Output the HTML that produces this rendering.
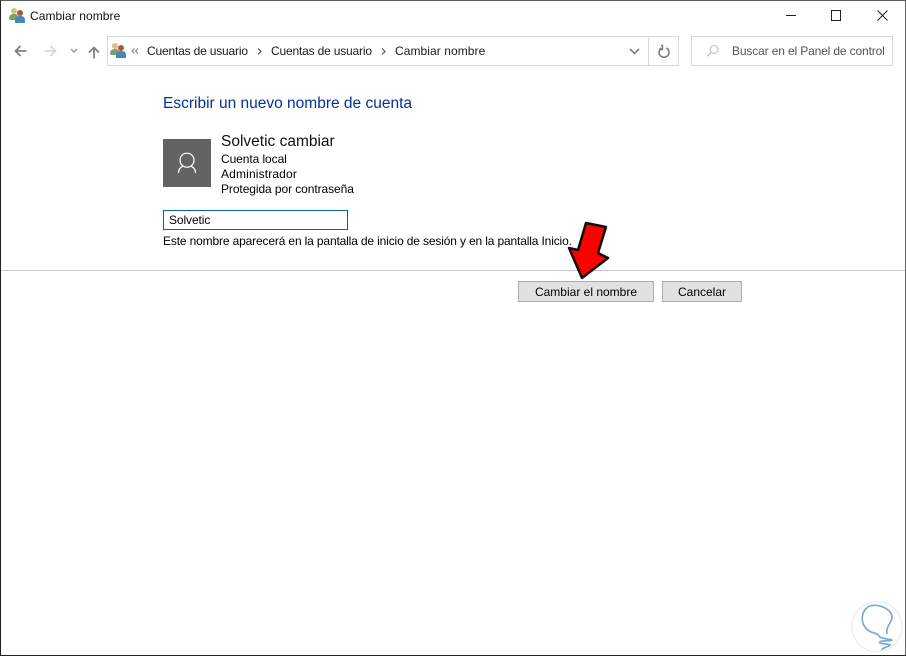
<!DOCTYPE html>
<html><head><meta charset="utf-8">
<style>
html,body{margin:0;padding:0;background:#fff}
body{width:906px;height:656px;position:relative;overflow:hidden;font-family:"Liberation Sans",sans-serif;font-size:12px;color:#000}
.t{position:absolute;white-space:nowrap;line-height:15px}
.box{position:absolute;box-sizing:border-box}
svg{position:absolute;overflow:visible}
</style></head><body>
<!-- window frame -->
<div class="box" style="left:0;top:0;width:906px;height:656px;border:1px solid #555;border-top-color:#5c5c5c;border-left-color:#222;border-bottom-color:#222;border-right-color:#666"></div>

<!-- title icon -->
<svg style="left:9px;top:7px" width="17" height="17" viewBox="0 0 17 17">
<circle cx="5" cy="4" r="3" fill="#d8c080"/><path d="M0 12c0-4 2-5 5-5s4 1 4 3v3H1z" fill="#7aa464"/>
<circle cx="11" cy="6" r="3" fill="#a8583c"/><path d="M6 16v-3c0-3 2-4 5-4s5 1 5 4v3z" fill="#4a86b8"/>
</svg>
<div class="t" style="left:30px;top:9px;color:#111;letter-spacing:.07px">Cambiar nombre</div>

<!-- window buttons -->
<div class="box" style="left:786px;top:15px;width:10px;height:1px;background:#222"></div>
<div class="box" style="left:831px;top:10px;width:10px;height:11px;border:1px solid #222"></div>
<svg style="left:877px;top:10px" width="11" height="11" viewBox="0 0 11 11"><path d="M.5.5l10 10M10.500.5l-10 10" stroke="#222" stroke-width="1" fill="none"/></svg>

<!-- nav arrows -->
<svg style="left:14px;top:45px" width="13" height="12" viewBox="0 0 13 12"><path d="M12.500 6H1.500M6.500 1L1.500 6l5 5" stroke="#808080" stroke-width="1.800" fill="none"/></svg>
<svg style="left:44px;top:45px" width="13" height="12" viewBox="0 0 13 12"><path d="M.5 6h11M6.500 1l5 5-5 5" stroke="#d8d8d8" stroke-width="1.800" fill="none"/></svg>
<svg style="left:70px;top:48px" width="8" height="5" viewBox="0 0 8 5"><path d="M1 1l3 3 3-3" stroke="#999" stroke-width="1.400" fill="none"/></svg>
<svg style="left:88px;top:46px" width="12" height="12" viewBox="0 0 12 12"><path d="M6 12.500V1.500M1 6.500l5-5 5 5" stroke="#808080" stroke-width="1.800" fill="none"/></svg>

<!-- address bar -->
<div class="box" style="left:107px;top:36px;width:572px;height:30px;border:1px solid #d9d9d9"></div>
<div class="box" style="left:648px;top:37px;width:1px;height:28px;background:#d9d9d9"></div>
<svg style="left:110px;top:42px" width="17" height="17" viewBox="0 0 17 17">
<circle cx="5" cy="4" r="3" fill="#d8c080"/><path d="M0 12c0-4 2-5 5-5s4 1 4 3v3H1z" fill="#7aa464"/>
<circle cx="11" cy="6" r="3" fill="#a8583c"/><path d="M6 16v-3c0-3 2-4 5-4s5 1 5 4v3z" fill="#4a86b8"/>
</svg>
<svg style="left:131px;top:48px" width="8" height="6" viewBox="0 0 8 6"><path d="M3.500.5L1 3l2.500 2.500M7 .5L4.500 3 7 5.500" stroke="#777" fill="none"/></svg>
<div class="t" style="left:147px;top:44px;color:#1a1a1a;letter-spacing:-.18px">Cuentas de usuario</div>
<svg style="left:257px;top:48px" width="5" height="7" viewBox="0 0 5 7"><path d="M1 .5l3 3-3 3" stroke="#555" stroke-width="1.200" fill="none"/></svg>
<div class="t" style="left:271px;top:44px;color:#1a1a1a;letter-spacing:-.18px">Cuentas de usuario</div>
<svg style="left:381px;top:48px" width="5" height="7" viewBox="0 0 5 7"><path d="M1 .5l3 3-3 3" stroke="#555" stroke-width="1.200" fill="none"/></svg>
<div class="t" style="left:395px;top:44px;color:#1a1a1a;letter-spacing:.07px">Cambiar nombre</div>
<svg style="left:629px;top:48px" width="11" height="7" viewBox="0 0 11 7"><path d="M1 1l4.500 4.500L10 1" stroke="#707070" stroke-width="1.500" fill="none"/></svg>
<svg style="left:658px;top:45px" width="12" height="13" viewBox="0 0 12 13"><path d="M3.500 3A5 5 0 1 0 8.500 3" stroke="#808080" stroke-width="1.600" fill="none"/><path d="M3 .5h1.500v4H1" stroke="#808080" stroke-width="1.400" fill="none"/></svg>

<!-- search -->
<div class="box" style="left:691px;top:36px;width:202px;height:30px;border:1px solid #d9d9d9"></div>
<svg style="left:706px;top:44px" width="14" height="14" viewBox="0 0 14 14"><circle cx="8" cy="5.500" r="4" stroke="#b8b8b8" fill="none"/><path d="M5 8.500L1 12.500" stroke="#e0b080" stroke-width="1.200"/></svg>
<div class="t" style="left:732px;top:44px;color:#555;letter-spacing:-.14px">Buscar en el Panel de control</div>

<!-- content -->
<div class="t" style="left:163px;top:95px;font-size:15.500px;line-height:18px;color:#003399">Escribir un nuevo nombre de cuenta</div>
<div class="box" style="left:163px;top:139px;width:48px;height:48px;background:#636363"></div>
<svg style="left:176px;top:151px" width="22" height="24" viewBox="0 0 22 24"><circle cx="11" cy="9.200" r="7" stroke="#fff" stroke-width="1.200" fill="none"/><path d="M2.500 22c0-3.500 2-6 5-7M19.500 22c0-3.500-2-6-5-7" stroke="#fff" stroke-width="1.200" fill="none"/></svg>
<div class="t" style="left:221px;top:133px;font-size:15.500px;line-height:18px;color:#111">Solvetic cambiar</div>
<div class="t" style="left:221px;top:152px;letter-spacing:-.08px">Cuenta local</div>
<div class="t" style="left:221px;top:167px;letter-spacing:.15px">Administrador</div>
<div class="t" style="left:221px;top:182px;letter-spacing:-.08px">Protegida por contraseña</div>

<div class="box" style="left:163px;top:210px;width:185px;height:20px;border:1px solid #0a5cad"></div>
<div class="t" style="left:169px;top:213px;letter-spacing:-.1px">Solvetic</div>
<div class="t" style="left:163px;top:234px;letter-spacing:-.15px">Este nombre aparecerá en la pantalla de inicio de sesión y en la pantalla Inicio.</div>

<div class="box" style="left:1px;top:270px;width:904px;height:1px;background:#c8c8c8"></div>

<div class="box" style="left:518px;top:281px;width:136px;height:21px;background:#e1e1e1;border:1px solid #adadad"></div>
<div class="t" style="left:518px;top:285px;width:136px;text-align:center">Cambiar el nombre</div>
<div class="box" style="left:662px;top:281px;width:80px;height:21px;background:#e1e1e1;border:1px solid #adadad"></div>
<div class="t" style="left:662px;top:285px;width:80px;text-align:center">Cancelar</div>

<!-- red arrow -->
<svg style="left:560px;top:215px" width="60" height="70" viewBox="0 0 60 70">
<path d="M26 8L46 12 38 38 48 43 22 63 9 33 18 35z" fill="#fe0000" stroke="#111" stroke-width="2.500" stroke-linejoin="round"/>
</svg>

<!-- watermark -->
<svg style="left:837px;top:590px" width="70" height="66" viewBox="0 0 210 198">
<circle cx="120" cy="110" r="75" fill="none" stroke="#e6eef6" stroke-width="4"/>
<path d="M150 130C145 110 168 95 165 78 162 60 135 45 110 46 90 47 78 62 76 80 74 100 85 118 100 125 110 130 120 128 126 138 130 146 150 146 165 150 155 155 130 150 128 157 128 163 150 160 160 165 152 172 140 172 135 178" fill="none" stroke="#7aa8d4" stroke-width="5" stroke-linecap="round" stroke-linejoin="round"/>
</svg>
</body></html>
